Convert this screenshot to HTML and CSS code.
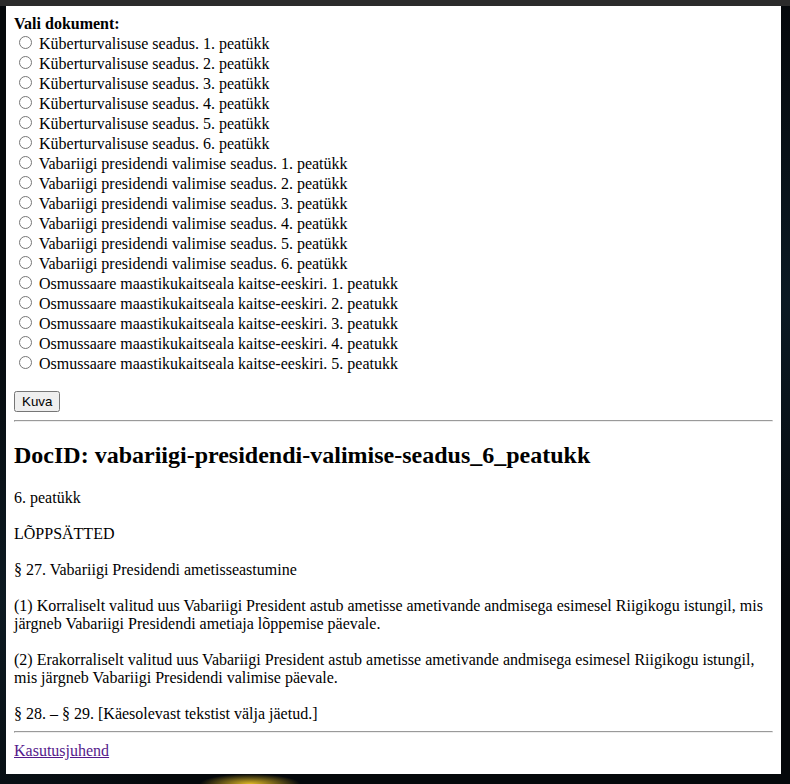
FILE: index.html
```html
<!DOCTYPE html>
<html lang="et">
<head>
<meta charset="utf-8">
<title>Dokumendid</title>
<link rel="stylesheet" href="styles.css">
</head>
<body>
<div class="page">
  <form class="picker">
    <b>Vali dokument:</b><br>
    <label><input type="radio" name="doc"> Küberturvalisuse seadus. 1. peatükk</label><br>
    <label><input type="radio" name="doc"> Küberturvalisuse seadus. 2. peatükk</label><br>
    <label><input type="radio" name="doc"> Küberturvalisuse seadus. 3. peatükk</label><br>
    <label><input type="radio" name="doc"> Küberturvalisuse seadus. 4. peatükk</label><br>
    <label><input type="radio" name="doc"> Küberturvalisuse seadus. 5. peatükk</label><br>
    <label><input type="radio" name="doc"> Küberturvalisuse seadus. 6. peatükk</label><br>
    <label><input type="radio" name="doc"> Vabariigi presidendi valimise seadus. 1. peatükk</label><br>
    <label><input type="radio" name="doc"> Vabariigi presidendi valimise seadus. 2. peatükk</label><br>
    <label><input type="radio" name="doc"> Vabariigi presidendi valimise seadus. 3. peatükk</label><br>
    <label><input type="radio" name="doc"> Vabariigi presidendi valimise seadus. 4. peatükk</label><br>
    <label><input type="radio" name="doc"> Vabariigi presidendi valimise seadus. 5. peatükk</label><br>
    <label><input type="radio" name="doc"> Vabariigi presidendi valimise seadus. 6. peatükk</label><br>
    <label><input type="radio" name="doc"> Osmussaare maastikukaitseala kaitse-eeskiri. 1. peatukk</label><br>
    <label><input type="radio" name="doc"> Osmussaare maastikukaitseala kaitse-eeskiri. 2. peatukk</label><br>
    <label><input type="radio" name="doc"> Osmussaare maastikukaitseala kaitse-eeskiri. 3. peatukk</label><br>
    <label><input type="radio" name="doc"> Osmussaare maastikukaitseala kaitse-eeskiri. 4. peatukk</label><br>
    <label><input type="radio" name="doc"> Osmussaare maastikukaitseala kaitse-eeskiri. 5. peatukk</label><br>
    <br>
    <button type="button" class="show">Kuva</button>
  </form>
  <hr class="rule">
  <h2 class="doc-id">DocID: vabariigi-presidendi-valimise-seadus_6_peatukk</h2>
  <div class="doc-text">6. peatükk<br><br>LÕPPSÄTTED<br><br>§ 27. Vabariigi Presidendi ametisseastumine<br><br>(1) Korraliselt valitud uus Vabariigi President astub ametisse ametivande andmisega esimesel Riigikogu istungil, mis järgneb Vabariigi Presidendi ametiaja lõppemise päevale.<br><br>(2) Erakorraliselt valitud uus Vabariigi President astub ametisse ametivande andmisega esimesel Riigikogu istungil, mis järgneb Vabariigi Presidendi valimise päevale.<br><br>§ 28. – § 29. [Käesolevast tekstist välja jäetud.]</div>
  <hr class="rule">
  <a class="help" href="#">Kasutusjuhend</a>
</div>
</body>
</html>
```
FILE: styles.css
```css
html, body {
  margin: 0;
  height: 100%;
}
body {
  font-family: "Liberation Serif", "Times New Roman", serif;
  font-size: 16px;
  color: #000;
  background:
    linear-gradient(to bottom, #2b2b2b 0, #2b2b2b 6px, transparent 6px),
    linear-gradient(160deg, transparent 0, transparent 46%, rgba(0,0,0,0) 46%),
    radial-gradient(ellipse 50px 10px at 250px 784px, rgba(235, 195, 40, 0.95), rgba(235, 195, 40, 0) 100%),
    radial-gradient(ellipse 200px 300px at 790px 300px, #0b1a24, rgba(0,0,0,0) 100%),
    radial-gradient(ellipse 200px 300px at 0px 600px, #0d1a22, rgba(0,0,0,0) 100%),
    #05080b;
  overflow: hidden;
}
.page {
  background: #fff;
  margin: 6px 9px 0 6px;
  padding: 9px 8px 16px 8px;
  height: 743px;
}
.picker {
  margin: 0;
}
.show {
  font-family: "Liberation Sans", Arial, sans-serif;
}
.rule {
  margin: 8px 0 9px;
}
.doc-id {
  font-size: 24px;
  margin: 20px 0;
}
.help {
  color: #551a8b;
}
```
